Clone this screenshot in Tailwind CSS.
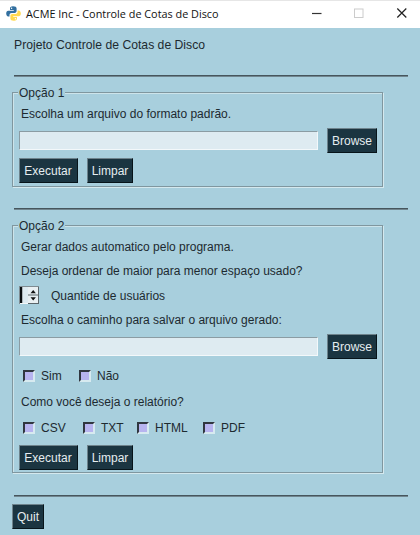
<!DOCTYPE html>
<html lang="pt-BR">
<head>
<meta charset="utf-8">
<title>ACME Inc - Controle de Cotas de Disco</title>
<script src="https://cdn.jsdelivr.net/npm/@tailwindcss/browser@4"></script>
</head>
<body class="w-[420px] h-[535px] overflow-hidden flex flex-col bg-[#a8cfdd] font-['Liberation_Sans',Arial,sans-serif] text-[12px] leading-[16px] text-[#1d2a30] whitespace-nowrap">
<header class="h-7 shrink-0 bg-white border-t border-[#e6e6e6] flex items-center pl-[6px]">
  <svg class="w-[15px] h-[15px] shrink-0 -mt-[2px]" viewBox="0 0 15 15">
    <path fill="#326f9f" d="M7 .3C4.600 .3 4 1.300 4 2.500V4h3.800v.7H2.300C.9 4.700.2 6 .2 7.500s.7 3 2.100 3h1.200V8.900c0-1.200.9-2 2.100-2h3.200c1 0 1.800-.8 1.800-1.800V2.500C10.600 1 9.400.3 7 .3z"/>
    <path fill="#ffd94f" d="M8 14.700c2.400 0 3-1 3-2.200V11H7.200v-.7h5.500c1.400 0 2.100-1.300 2.100-2.800s-.7-3-2.100-3h-1.200v1.600c0 1.200-.9 2-2.100 2H6.200c-1 0-1.800.8-1.800 1.800v2.600C4.400 14 5.600 14.700 8 14.700z"/>
    <circle cx="5.600" cy="2.300" r=".7" fill="#fff"/><circle cx="9.400" cy="12.700" r=".7" fill="#fff"/>
  </svg>
  <h1 class="ml-[5px] -mt-[2px] w-[280px] font-['Open_Sans','Noto_Sans',sans-serif] text-[10.85px] text-[#111]">ACME Inc - Controle de Cotas de Disco</h1>
  <svg class="w-[102px] h-[12px] shrink-0 -mt-[3px]" viewBox="0 0 102 12" fill="none">
    <path d="M6 6.500h9.500" stroke="#333" stroke-width="1.200"/>
    <rect x="48.500" y="2" width="8.500" height="8.500" stroke="#ccc"/>
    <path d="M91.300 1.500l9 9M100.300 1.500l-9 9" stroke="#222" stroke-width="1.200"/>
  </svg>
</header>
<main class="flex flex-col">
  <p class="mt-[9px] ml-[14px] h-4 text-[12.2px]">Projeto Controle de Cotas de Disco</p>
  <div class="mt-[22px] ml-[14px] w-[394px] h-[2px] bg-[#46565d] border-b border-[#71868f]"></div>

  <section class="relative mt-[15px] ml-3 w-[371px] h-[95px] border border-[#80979f] shadow-[inset_1px_1px_0_#cde4ea,1px_1px_0_#d5e9ee]">
    <h2 class="absolute left-[5px] -top-[8px] px-px bg-[#a8cfdd]">Opção 1</h2>
    <p class="mt-[13px] ml-[8px] h-4">Escolha um arquivo do formato padrão.</p>
    <div class="mt-[6px] ml-[6px] flex items-center h-[25px]">
      <div class="w-[299px] h-[19px] bg-[#deebf1] border border-t-[#8b9ca3] border-l-[#8b9ca3] border-b-[#f3f8fa] border-r-[#f3f8fa]"></div>
      <button class="ml-[9px] w-[50px] h-[25px] bg-[#1b3541] border border-t-[#6e838c] border-l-[#6e838c] border-b-[#07141a] border-r-[#07141a] text-[#e6edf0]">Browse</button>
    </div>
    <div class="mt-[5px] ml-[6px] flex gap-[9px]">
      <button class="w-[59px] h-[25px] bg-[#1b3541] border border-t-[#6e838c] border-l-[#6e838c] border-b-[#07141a] border-r-[#07141a] text-[#e6edf0] pr-px">Executar</button>
      <button class="w-[46px] h-[25px] bg-[#1b3541] border border-t-[#6e838c] border-l-[#6e838c] border-b-[#07141a] border-r-[#07141a] text-[#e6edf0]">Limpar</button>
    </div>
  </section>

  <div class="mt-[21px] ml-[14px] w-[394px] h-[2px] bg-[#46565d] border-b border-[#71868f]"></div>

  <section class="relative mt-[15px] ml-3 w-[371px] h-[248px] border border-[#80979f] shadow-[inset_1px_1px_0_#cde4ea,1px_1px_0_#d5e9ee]">
    <h2 class="absolute left-[5px] -top-[8px] px-px bg-[#a8cfdd]">Opção 2</h2>
    <p class="mt-[13px] ml-[8px] h-4">Gerar dados automatico pelo programa.</p>
    <p class="mt-[8px] ml-[8px] h-4">Deseja ordenar de maior para menor espaço usado?</p>
    <div class="mt-[7px] ml-[6px] h-[18px] flex items-center">
      <svg class="w-[20px] h-[18px]" viewBox="0 0 20 18">
        <rect width="20" height="18" fill="#f4f8fa"/><path d="M0 18V0h20v1H1v17z" fill="#7f8c92"/>
        <rect x="1" y="1" width="2.500" height="16" fill="#0b0f11"/><rect x="3.500" y="1" width="5.500" height="16" fill="#deebf1"/>
        <rect x="9" y="1" width="10" height="16" fill="#e9f0f3"/>
        <path d="M9 9h10M9 17.500h11M19.500 1v17" stroke="#5b666b"/>
        <path d="M11.500 7.200L14.200 4l2.700 3.200zM11.500 11.200h5.400l-2.700 3.200z" fill="#111"/>
      </svg>
      <p class="ml-[12px] mt-px">Quantide de usuários</p>
    </div>
    <p class="mt-[8px] ml-[8px] h-4">Escolha o caminho para salvar o arquivo gerado:</p>
    <div class="mt-[6px] ml-[6px] flex items-center h-[25px]">
      <div class="w-[299px] h-[19px] bg-[#deebf1] border border-t-[#8b9ca3] border-l-[#8b9ca3] border-b-[#f3f8fa] border-r-[#f3f8fa]"></div>
      <button class="ml-[9px] w-[50px] h-[25px] bg-[#1b3541] border border-t-[#6e838c] border-l-[#6e838c] border-b-[#07141a] border-r-[#07141a] text-[#e6edf0]">Browse</button>
    </div>
    <div class="mt-[9px] ml-[10px] h-4 flex items-center">
      <i class="size-[12px] bg-[#b7b4ef] border-2 border-t-[#303740] border-l-[#303740] border-b-[#d7eaf0] border-r-[#d7eaf0]"></i><span class="ml-[6px] w-[38px]">Sim</span>
      <i class="size-[12px] bg-[#b7b4ef] border-2 border-t-[#303740] border-l-[#303740] border-b-[#d7eaf0] border-r-[#d7eaf0]"></i><span class="ml-[6px]">Não</span>
    </div>
    <p class="mt-[10px] ml-[8px] h-4">Como você deseja o relatório?</p>
    <div class="mt-[10px] ml-[10px] h-4 flex items-center">
      <i class="size-[12px] bg-[#b7b4ef] border-2 border-t-[#303740] border-l-[#303740] border-b-[#d7eaf0] border-r-[#d7eaf0]"></i><span class="ml-[6px] w-[42px]">CSV</span>
      <i class="size-[12px] bg-[#b7b4ef] border-2 border-t-[#303740] border-l-[#303740] border-b-[#d7eaf0] border-r-[#d7eaf0]"></i><span class="ml-[6px] w-[36px]">TXT</span>
      <i class="size-[12px] bg-[#b7b4ef] border-2 border-t-[#303740] border-l-[#303740] border-b-[#d7eaf0] border-r-[#d7eaf0]"></i><span class="ml-[6px] w-[48px]">HTML</span>
      <i class="size-[12px] bg-[#b7b4ef] border-2 border-t-[#303740] border-l-[#303740] border-b-[#d7eaf0] border-r-[#d7eaf0]"></i><span class="ml-[6px]">PDF</span>
    </div>
    <div class="mt-[9px] ml-[6px] flex gap-[9px]">
      <button class="w-[59px] h-[25px] bg-[#1b3541] border border-t-[#6e838c] border-l-[#6e838c] border-b-[#07141a] border-r-[#07141a] text-[#e6edf0] pr-px">Executar</button>
      <button class="w-[46px] h-[25px] bg-[#1b3541] border border-t-[#6e838c] border-l-[#6e838c] border-b-[#07141a] border-r-[#07141a] text-[#e6edf0]">Limpar</button>
    </div>
  </section>

  <div class="mt-[22px] ml-[14px] w-[394px] h-[2px] bg-[#46565d] border-b border-[#71868f]"></div>
  <button class="mt-[7px] ml-3 w-[32px] h-[25px] bg-[#1b3541] border border-t-[#6e838c] border-l-[#6e838c] border-b-[#07141a] border-r-[#07141a] text-[#e6edf0]">Quit</button>
</main>
</body>
</html>
